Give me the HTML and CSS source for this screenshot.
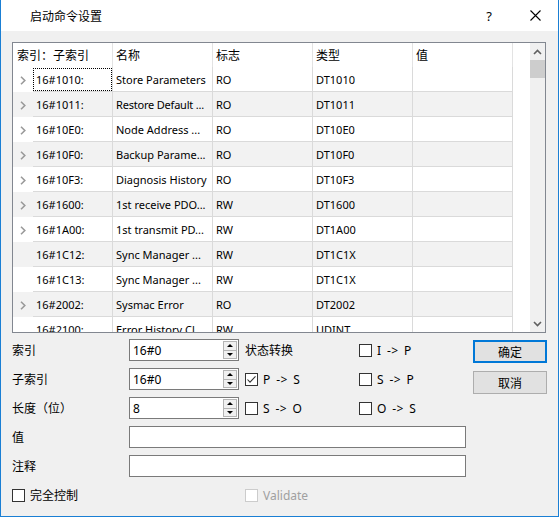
FILE: index.html
```html
<!DOCTYPE html>
<html lang="zh">
<head>
<meta charset="utf-8">
<title>启动命令设置</title>
<link rel="stylesheet" href="styles.css">
</head>
<body>
<div class="window">
  <div class="titlebar">
    <span class="title">启动命令设置</span>
    <span class="help">?</span>
    <span class="close"><svg width="11" height="11" viewBox="0 0 11 11"><path d="M0.5 0.5 L10.5 10.5 M10.5 0.5 L0.5 10.5" stroke="#000" stroke-width="1.1" fill="none"/></svg></span>
  </div>
  <div class="content">
    <div class="listbox">
      <div class="list">
        <div class="hdr">
          <span class="h h0">索引：子索引</span>
          <span class="h">名称</span>
          <span class="h">标志</span>
          <span class="h">类型</span>
          <span class="h">值</span>
          <span class="fill"></span>
        </div>
        <div class="row">
          <span class="ar"><svg class="chev" width="6" height="9" viewBox="0 0 6 9"><polyline points="1,0.8 4.8,4.5 1,8.2" fill="none" stroke="#9a9a9a" stroke-width="1.6"/></svg></span>
          <span class="c c1 focus">16#1010:</span><span class="c">Store Parameters</span><span class="c">RO</span><span class="c">DT1010</span><span class="c"></span><span class="fill"></span>
        </div>
        <div class="row alt">
          <span class="ar"><svg class="chev" width="6" height="9" viewBox="0 0 6 9"><polyline points="1,0.8 4.8,4.5 1,8.2" fill="none" stroke="#9a9a9a" stroke-width="1.6"/></svg></span>
          <span class="c c1">16#1011:</span><span class="c tight">Restore Default ...</span><span class="c">RO</span><span class="c">DT1011</span><span class="c"></span><span class="fill"></span>
        </div>
        <div class="row">
          <span class="ar"><svg class="chev" width="6" height="9" viewBox="0 0 6 9"><polyline points="1,0.8 4.8,4.5 1,8.2" fill="none" stroke="#9a9a9a" stroke-width="1.6"/></svg></span>
          <span class="c c1">16#10E0:</span><span class="c">Node Address ...</span><span class="c">RO</span><span class="c">DT10E0</span><span class="c"></span><span class="fill"></span>
        </div>
        <div class="row alt">
          <span class="ar"><svg class="chev" width="6" height="9" viewBox="0 0 6 9"><polyline points="1,0.8 4.8,4.5 1,8.2" fill="none" stroke="#9a9a9a" stroke-width="1.6"/></svg></span>
          <span class="c c1">16#10F0:</span><span class="c">Backup Parame...</span><span class="c">RO</span><span class="c">DT10F0</span><span class="c"></span><span class="fill"></span>
        </div>
        <div class="row">
          <span class="ar"><svg class="chev" width="6" height="9" viewBox="0 0 6 9"><polyline points="1,0.8 4.8,4.5 1,8.2" fill="none" stroke="#9a9a9a" stroke-width="1.6"/></svg></span>
          <span class="c c1">16#10F3:</span><span class="c">Diagnosis History</span><span class="c">RO</span><span class="c">DT10F3</span><span class="c"></span><span class="fill"></span>
        </div>
        <div class="row alt">
          <span class="ar"><svg class="chev" width="6" height="9" viewBox="0 0 6 9"><polyline points="1,0.8 4.8,4.5 1,8.2" fill="none" stroke="#9a9a9a" stroke-width="1.6"/></svg></span>
          <span class="c c1">16#1600:</span><span class="c">1st receive PDO...</span><span class="c">RW</span><span class="c">DT1600</span><span class="c"></span><span class="fill"></span>
        </div>
        <div class="row">
          <span class="ar"><svg class="chev" width="6" height="9" viewBox="0 0 6 9"><polyline points="1,0.8 4.8,4.5 1,8.2" fill="none" stroke="#9a9a9a" stroke-width="1.6"/></svg></span>
          <span class="c c1">16#1A00:</span><span class="c">1st transmit PD...</span><span class="c">RW</span><span class="c">DT1A00</span><span class="c"></span><span class="fill"></span>
        </div>
        <div class="row alt">
          <span class="ar"></span>
          <span class="c c1">16#1C12:</span><span class="c">Sync Manager ...</span><span class="c">RW</span><span class="c">DT1C1X</span><span class="c"></span><span class="fill"></span>
        </div>
        <div class="row">
          <span class="ar"></span>
          <span class="c c1">16#1C13:</span><span class="c">Sync Manager ...</span><span class="c">RW</span><span class="c">DT1C1X</span><span class="c"></span><span class="fill"></span>
        </div>
        <div class="row alt">
          <span class="ar"><svg class="chev" width="6" height="9" viewBox="0 0 6 9"><polyline points="1,0.8 4.8,4.5 1,8.2" fill="none" stroke="#9a9a9a" stroke-width="1.6"/></svg></span>
          <span class="c c1">16#2002:</span><span class="c">Sysmac Error</span><span class="c">RO</span><span class="c">DT2002</span><span class="c"></span><span class="fill"></span>
        </div>
        <div class="row">
          <span class="ar"></span>
          <span class="c c1">16#2100:</span><span class="c">Error History Cl...</span><span class="c">RW</span><span class="c">UDINT</span><span class="c"></span><span class="fill"></span>
        </div>
      </div>
      <div class="vscroll">
        <span class="sb-btn"><svg width="9" height="6" viewBox="0 0 9 6"><polyline points="1,5 4.5,1.5 8,5" fill="none" stroke="#606060" stroke-width="1.6"/></svg></span>
        <span class="thumb"></span>
        <span class="sb-space"></span>
        <span class="sb-btn"><svg width="9" height="6" viewBox="0 0 9 6"><polyline points="1,1 4.5,4.5 8,1" fill="none" stroke="#606060" stroke-width="1.6"/></svg></span>
      </div>
    </div>

    <div class="form">
      <span class="lbl r1">索引</span>
      <div class="spin r1"><span class="val">16#0</span><span class="spinbtns"><span class="sp up"></span><span class="sp down"></span></span></div>
      <span class="lbl c4 r1">状态转换</span>
      <label class="chk c5 r1"><span class="box"></span><span class="arrow">I -&gt; P</span></label>

      <span class="lbl r2">子索引</span>
      <div class="spin r2"><span class="val">16#0</span><span class="spinbtns"><span class="sp up"></span><span class="sp down"></span></span></div>
      <label class="chk c4 r2"><span class="box"><svg width="11" height="11" viewBox="0 0 11 11"><polyline points="1.5,5.5 4,8.2 9.5,2.3" fill="none" stroke="#333" stroke-width="1.1"/></svg></span><span class="arrow">P -&gt; S</span></label>
      <label class="chk c5 r2"><span class="box"></span><span class="arrow">S -&gt; P</span></label>

      <span class="lbl r3">长度（位）</span>
      <div class="spin r3"><span class="val">8</span><span class="spinbtns"><span class="sp up"></span><span class="sp down"></span></span></div>
      <label class="chk c4 r3"><span class="box"></span><span class="arrow">S -&gt; O</span></label>
      <label class="chk c5 r3"><span class="box"></span><span class="arrow">O -&gt; S</span></label>

      <div class="btns">
        <span class="btn default">确定</span>
        <span class="btn">取消</span>
      </div>

      <span class="lbl r4">值</span>
      <span class="text r4"></span>

      <span class="lbl r5">注释</span>
      <span class="text r5"></span>

      <label class="chk r6 wide"><span class="box"></span><span>完全控制</span></label>
      <label class="chk c4 r6 disabled"><span class="box"></span><span>Validate</span></label>
    </div>
  </div>
</div>
</body>
</html>
```

FILE: styles.css
```css
* { box-sizing: border-box; }
html, body { margin: 0; padding: 0; }
body {
  width: 559px;
  height: 517px;
  overflow: hidden;
  font-family: "Noto Sans", "Noto Sans CJK SC", sans-serif;
  font-size: 12px;
  color: #000;
  background: #f0f0f0;
}
.window {
  width: 559px;
  height: 517px;
  border: 1px solid #1a7fd4;
  border-top: none;
  background: #f0f0f0;
  display: flex;
  flex-direction: column;
}
.titlebar {
  height: 31px;
  flex: none;
  background: #fff;
  display: flex;
  align-items: center;
}
.title { padding-left: 29px; }
.help {
  margin-left: auto;
  width: 46px;
  text-align: center;
  font-size: 13px;
}
.close {
  width: 46px;
  display: flex;
  justify-content: center;
  align-items: center;
}
.content { padding: 11px 0 0 11px; }

/* list box */
.listbox {
  width: 534px;
  height: 291px;
  border: 1px solid #828790;
  background: #fff;
  display: flex;
}
.list {
  width: 517px;
  height: 289px;
  overflow: hidden;
}
.hdr, .row { display: flex; }
.hdr { height: 24px; }
.h {
  width: 100px;
  height: 24px;
  line-height: 24px;
  padding-left: 3px;
  padding-top: 1px;
  border-right: 1px solid #e3e3e3;
  white-space: nowrap;
}
.h.h0 { padding-left: 4px; }
.fill { width: 17px; flex: none; background: #fff; }
.row { height: 25px; }
.ar {
  width: 20px;
  flex: none;
  display: flex;
  align-items: center;
  padding-left: 7px;
  padding-top: 1px;
}
.c {
  width: 100px;
  flex: none;
  height: 25px;
  font-size: 11px;
  line-height: 23px;
  padding-top: 1px;
  padding-left: 3px;
  border-right: 1px solid #dadada;
  border-bottom: 1px solid #dadada;
  white-space: nowrap;
  overflow: hidden;
}
.c.tight { letter-spacing: -0.2px; }
.c.c1 { width: 80px; }
.row.alt .ar, .row.alt .c { background: #f2f2f2; }
.focus { position: relative; }
.focus::after {
  content: "";
  position: absolute;
  left: 0;
  top: 1px;
  right: 0;
  bottom: 0;
  border: 1px dotted #000;
}
.vscroll {
  width: 15px;
  flex: none;
  background: #f0f0f0;
  display: flex;
  flex-direction: column;
}
.sb-btn {
  height: 17px;
  display: flex;
  align-items: center;
  justify-content: center;
}
.thumb { height: 18px; background: #cdcdcd; }
.sb-space { flex: 1; }

/* form */
.form {
  margin-top: 6px;
  display: grid;
  grid-template-columns: 117px 110px 6px 114px 114px 74px;
  grid-auto-rows: 22px;
  row-gap: 7px;
}
.lbl { display: flex; align-items: center; grid-column: 1; }
.lbl.c4 { grid-column: 4; }
.r1 { grid-row: 1; }
.r2 { grid-row: 2; }
.r3 { grid-row: 3; }
.r4 { grid-row: 4; }
.r5 { grid-row: 5; }
.r6 { grid-row: 6; }
.c4 { grid-column: 4; }
.c5 { grid-column: 5; }
.spin {
  grid-column: 2;
  border: 1px solid #7a7a7a;
  background: #fff;
  display: flex;
  align-items: center;
}
.spin .val { flex: 1; padding-left: 3px; }
.spinbtns {
  width: 14px;
  height: 18px;
  margin-right: 1px;
  display: flex;
  flex-direction: column;
}
.sp {
  flex: 1;
  border: 1px solid #b4b4b4;
  background: #f0f0f0;
  display: flex;
  align-items: center;
  justify-content: center;
}
.sp.down { border-top: none; }
.sp.up::before {
  content: "";
  border-left: 3px solid transparent;
  border-right: 3px solid transparent;
  border-bottom: 3px solid #000;
}
.sp.down::before {
  content: "";
  border-left: 3px solid transparent;
  border-right: 3px solid transparent;
  border-top: 3px solid #000;
}
.text {
  grid-column: 2 / 6;
  width: 337px;
  border: 1px solid #7a7a7a;
  background: #fff;
}
.chk {
  display: flex;
  align-items: center;
  gap: 5px;
}
.chk .arrow { word-spacing: 2px; letter-spacing: 0.4px; }
.chk.wide { grid-column: 1 / 3; }
.box {
  width: 13px;
  height: 13px;
  flex: none;
  border: 1px solid #333;
  background: #fff;
  display: flex;
  align-items: center;
  justify-content: center;
}
.chk.disabled { color: #a0a0a0; }
.chk.disabled .box { border-color: #cccccc; }
.btns {
  grid-column: 6;
  grid-row: 1 / 4;
  display: flex;
  flex-direction: column;
  gap: 8px;
  padding-top: 1px;
}
.btn {
  height: 23px;
  border: 1px solid #adadad;
  background: #e1e1e1;
  display: flex;
  align-items: center;
  justify-content: center;
}
.btn.default { border: 2px solid #0078d7; }
```
